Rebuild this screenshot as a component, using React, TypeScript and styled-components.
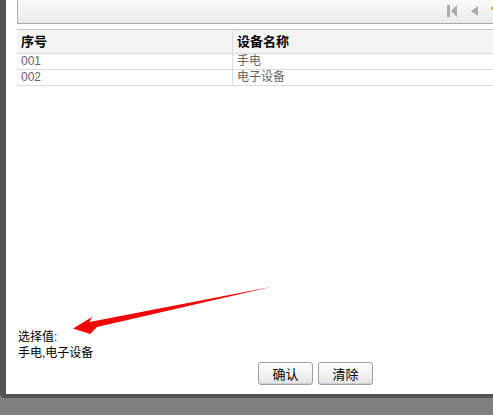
import styled, { createGlobalStyle } from "styled-components";

const GlobalStyle = createGlobalStyle`
  html, body {
    margin: 0;
    padding: 0;
    background: #7f7f7f;
    overflow: hidden;
  }
  body {
    font-family: "Liberation Sans", "Noto Sans CJK SC", sans-serif;
    font-size: 12px;
  }
`;

const Dialog = styled.div`
  position: relative;
  width: calc(100% - 6px);
  height: 394px;
  background: #fff;
  border-left: 6px solid #535353;
  border-bottom: 4px solid #535353;
  border-bottom-left-radius: 5px;
  box-shadow: 0 1px 0 #6a6a6a;
  display: flex;
  flex-direction: column;
  padding-left: 11px;
  box-sizing: content-box;
`;

const Inner = styled.div`
  flex: 1;
  display: flex;
  flex-direction: column;
  margin-left: -11px;
  padding-left: 11px;
  width: calc(100% - 11px);
`;

const Toolbar = styled.div`
  height: 23px;
  border-left: 1px solid #b4b4b4;
  border-bottom: 1px solid #a9a9a9;
  background: linear-gradient(#fafafa, #e9e9e9);
  display: flex;
  align-items: flex-start;
  justify-content: flex-end;
  gap: 13px;
  padding-top: 5px;
  padding-right: 0;
  box-sizing: border-box;
  height: 24px;
`;

const PagerIcon = styled.svg`
  display: block;
`;

const Separator = styled.span`
  width: 2px;
  height: 3px;
  margin-top: 2px;
  background: #d8b040;
`;

const Grid = styled.div`
  margin-top: 5px;
  border-top: 1px solid #c4c4c4;
`;

const Row = styled.div<{ $head?: boolean }>`
  display: grid;
  grid-template-columns: 215px 1fr;
  height: ${({ $head }) => ($head ? "23px" : "15px")};
  background: ${({ $head }) => ($head ? "#f4f4f4" : "#fff")};
  border-bottom: 1px solid #dcdcdc;
  color: ${({ $head }) => ($head ? "#000" : "#666")};
  font-weight: ${({ $head }) => ($head ? "bold" : "normal")};
  font-size: ${({ $head }) => ($head ? "13px" : "12px")};
  line-height: ${({ $head }) => ($head ? "23px" : "15px")};
`;

const Cell = styled.div`
  padding-left: 4px;
  white-space: nowrap;
  overflow: hidden;
  & + & {
    border-left: 1px solid #dcdcdc;
  }
`;

const Footer = styled.div`
  margin-top: auto;
  padding-left: 1px;
  padding-bottom: 9px;
`;

const ValueText = styled.div`
  font-size: 12px;
  line-height: 16px;
  color: #000;
`;

const ButtonRow = styled.div`
  display: flex;
  gap: 5px;
  margin-top: 1px;
  padding-left: 240px;
`;

const Button = styled.button`
  width: 55px;
  height: 23px;
  border: 1px solid #a0a0a0;
  border-radius: 3px;
  background: linear-gradient(#ffffff, #e4e4e4);
  font-family: "Liberation Sans", "Noto Sans CJK SC", sans-serif;
  font-size: 13px;
  color: #000;
  padding: 0;
  box-shadow: inset 0 -1px 0 #d0d0d0;
`;

const ArrowLayer = styled.svg`
  position: absolute;
  left: -6px;
  top: 0;
  pointer-events: none;
`;

const rows = [
  { id: "001", name: "手电" },
  { id: "002", name: "电子设备" },
];

export default function App() {
  return (
    <>
      <GlobalStyle />
      <Dialog>
        <Inner>
          <Toolbar>
            <PagerIcon width="11" height="12" viewBox="0 0 11 12">
              <rect x="0" y="0" width="3" height="12" fill="#ababab" />
              <polygon points="10,0 10,12 4,6" fill="#ababab" />
            </PagerIcon>
            <PagerIcon width="7" height="10" viewBox="0 0 7 10" style={{ marginTop: 1 }}>
              <polygon points="7,0 7,10 0,5" fill="#ababab" />
            </PagerIcon>
            <Separator />
          </Toolbar>
          <Grid>
            <Row $head>
              <Cell>序号</Cell>
              <Cell>设备名称</Cell>
            </Row>
            {rows.map((r) => (
              <Row key={r.id}>
                <Cell>{r.id}</Cell>
                <Cell>{r.name}</Cell>
              </Row>
            ))}
          </Grid>
          <Footer>
            <ValueText>选择值:</ValueText>
            <ValueText>手电,电子设备</ValueText>
            <ButtonRow>
              <Button>确认</Button>
              <Button>清除</Button>
            </ButtonRow>
          </Footer>
        </Inner>
        <ArrowLayer width="493" height="394" viewBox="0 0 493 394">
          <polygon
            points="73,328.5 92,317 89.5,322 273,286.5 97,327 90,334"
            fill="#f00808"
          />
        </ArrowLayer>
      </Dialog>
    </>
  );
}
